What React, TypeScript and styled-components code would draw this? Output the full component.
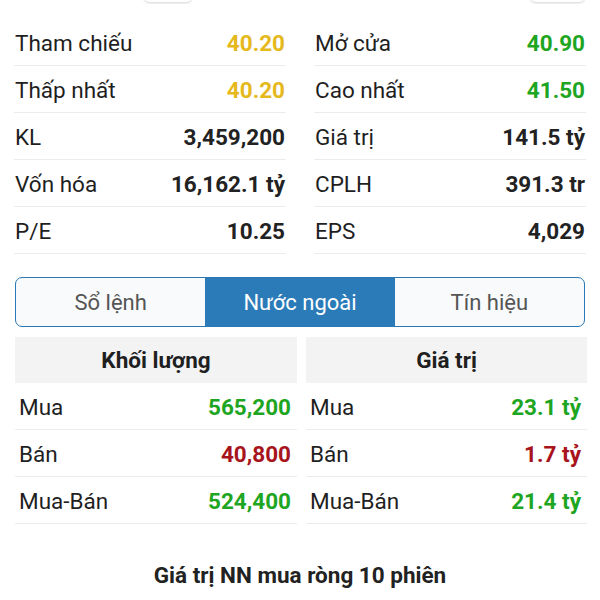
import React from 'react';
import styled, { createGlobalStyle } from 'styled-components';

const GlobalStyle = createGlobalStyle`
  * { box-sizing: border-box; }
  body {
    margin: 0;
    background: #ffffff;
    font-family: Roboto, "Noto Sans", "DejaVu Sans", sans-serif;
    color: #222222;
  }
`;

const colors = {
    ref: '#e5b81c',
    up: '#1ea522',
    down: '#a8141c',
    plain: '#222222',
};

type Tone = keyof typeof colors;

const Page = styled.div`
  width: 600px;
  height: 600px;
  overflow: hidden;
  padding: 0 14px;
`;

const Toolbar = styled.div`
  display: flex;
  align-items: flex-end;
  height: 4px;
  margin-bottom: 15px;
  overflow: hidden;
`;

const ToolButton = styled.div<{ $width: number; $offset: number }>`
  width: ${(p) => p.$width}px;
  height: 30px;
  margin-left: ${(p) => p.$offset}px;
  margin-bottom: 2px;
  border-radius: 6px;
  background: #ffffff;
  box-shadow: 0 1px 3px rgba(0, 0, 0, 0.18);
  flex-shrink: 0;
`;

const StatsGrid = styled.div`
  display: grid;
  grid-template-columns: 1fr 1fr;
  column-gap: 28px;
`;

const Column = styled.div`
  display: flex;
  flex-direction: column;
`;

const StatRow = styled.div`
  display: flex;
  justify-content: space-between;
  align-items: center;
  height: 47px;
  border-bottom: 1px solid #ececec;
  padding: 2px 1px 0;
  font-size: 22.5px;
`;

const Label = styled.span`
  color: #1f1f1f;
`;

const Value = styled.span<{ $tone: Tone }>`
  color: ${(p) => colors[p.$tone]};
  font-weight: 700;
`;

const Tabs = styled.div`
  display: grid;
  grid-template-columns: 1fr 1fr 1fr;
  margin: 23px 1px 0;
  height: 50px;
  border: 1.5px solid #2b78b4;
  border-radius: 7px;
  overflow: hidden;
  background: #f8fafb;
`;

const Tab = styled.div<{ $active?: boolean }>`
  display: flex;
  align-items: center;
  justify-content: center;
  font-size: 22px;
  color: ${(p) => (p.$active ? '#ffffff' : '#555555')};
  background: ${(p) => (p.$active ? '#2b7bb9' : 'transparent')};
`;

const ForeignGrid = styled.div`
  display: grid;
  grid-template-columns: 282px 281px;
  column-gap: 9px;
  margin: 10px 0 0 1px;
`;

const TableHead = styled.div`
  display: flex;
  align-items: center;
  justify-content: center;
  height: 46px;
  background: #f3f3f3;
  font-size: 22.5px;
  font-weight: 700;
  color: #1f1f1f;
`;

const TableRow = styled(StatRow)`
  padding: 2px 6px 0 4px;
`;

const Title = styled.div`
  margin-top: 38px;
  text-align: center;
  font-size: 22.5px;
  font-weight: 700;
  color: #222222;
`;

type Stat = { label: string; value: string; tone: Tone };

const leftStats: Stat[] = [
    { label: 'Tham chiếu', value: '40.20', tone: 'ref' },
    { label: 'Thấp nhất', value: '40.20', tone: 'ref' },
    { label: 'KL', value: '3,459,200', tone: 'plain' },
    { label: 'Vốn hóa', value: '16,162.1 tỷ', tone: 'plain' },
    { label: 'P/E', value: '10.25', tone: 'plain' },
];

const rightStats: Stat[] = [
    { label: 'Mở cửa', value: '40.90', tone: 'up' },
    { label: 'Cao nhất', value: '41.50', tone: 'up' },
    { label: 'Giá trị', value: '141.5 tỷ', tone: 'plain' },
    { label: 'CPLH', value: '391.3 tr', tone: 'plain' },
    { label: 'EPS', value: '4,029', tone: 'plain' },
];

const volume: Stat[] = [
    { label: 'Mua', value: '565,200', tone: 'up' },
    { label: 'Bán', value: '40,800', tone: 'down' },
    { label: 'Mua-Bán', value: '524,400', tone: 'up' },
];

const amount: Stat[] = [
    { label: 'Mua', value: '23.1 tỷ', tone: 'up' },
    { label: 'Bán', value: '1.7 tỷ', tone: 'down' },
    { label: 'Mua-Bán', value: '21.4 tỷ', tone: 'up' },
];

function App() {
    return (
        <>
            <GlobalStyle />
            <Page>
                <Toolbar>
                    <ToolButton $width={48} $offset={130} />
                    <ToolButton $width={55} $offset={338} />
                </Toolbar>

                <StatsGrid>
                    {[leftStats, rightStats].map((col, i) => (
                        <Column key={i}>
                            {col.map((s) => (
                                <StatRow key={s.label}>
                                    <Label>{s.label}</Label>
                                    <Value $tone={s.tone}>{s.value}</Value>
                                </StatRow>
                            ))}
                        </Column>
                    ))}
                </StatsGrid>

                <Tabs>
                    <Tab>Sổ lệnh</Tab>
                    <Tab $active>Nước ngoài</Tab>
                    <Tab>Tín hiệu</Tab>
                </Tabs>

                <ForeignGrid>
                    {[
                        { head: 'Khối lượng', rows: volume },
                        { head: 'Giá trị', rows: amount },
                    ].map((t) => (
                        <Column key={t.head}>
                            <TableHead>{t.head}</TableHead>
                            {t.rows.map((s) => (
                                <TableRow key={s.label}>
                                    <Label>{s.label}</Label>
                                    <Value $tone={s.tone}>{s.value}</Value>
                                </TableRow>
                            ))}
                        </Column>
                    ))}
                </ForeignGrid>

                <Title>Giá trị NN mua ròng 10 phiên</Title>
            </Page>
        </>
    );
}

export default App;
